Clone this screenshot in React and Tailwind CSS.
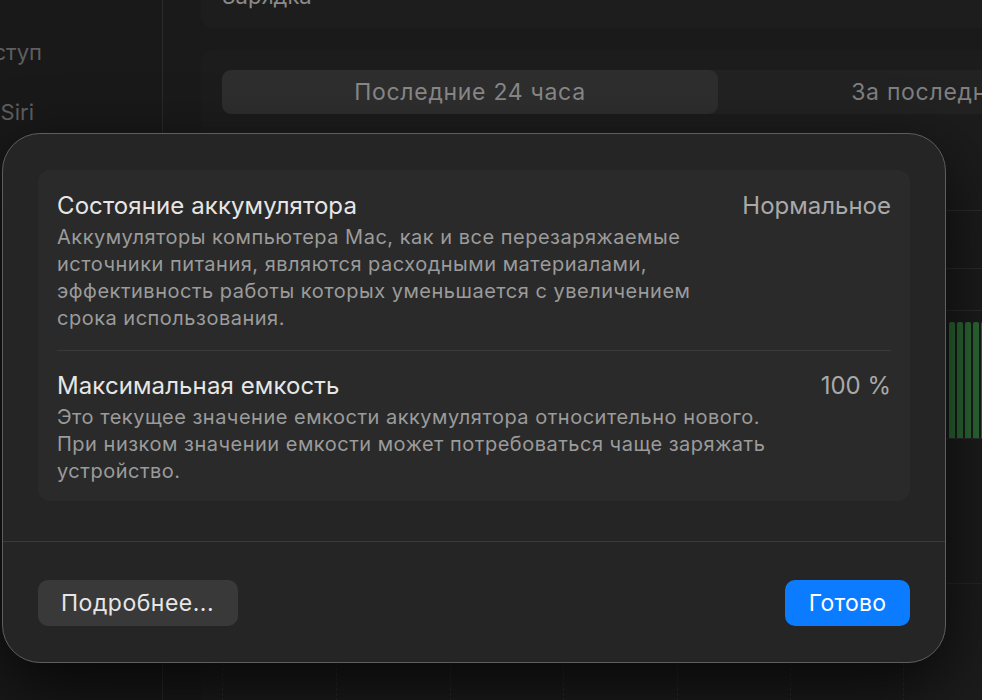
const font = { fontFamily: 'Inter, "Noto Sans", sans-serif' }

const gridX = [222, 336, 450, 563, 677, 790, 903]

function Row({ title, value, lines }) {
  return (
    <div className="flex justify-between gap-6">
      <div>
        <p className="text-[24px] leading-[28px] tracking-[0.1px] text-[#e6e6e6]">{title}</p>
        <div className="mt-[4px] text-[20px] leading-[27px] tracking-[0.5px] text-[#9b9b9b]">
          {lines.map((l) => (
            <p key={l} className="whitespace-nowrap">{l}</p>
          ))}
        </div>
      </div>
      <p className="whitespace-nowrap text-[24px] leading-[28px] text-[#a9a9a9]">{value}</p>
    </div>
  )
}

export default function App() {
  return (
    <div style={font} className="relative h-[700px] w-[982px] overflow-hidden bg-[#151515]">
      {/* settings window behind the sheet */}
      <div className="flex h-full">
        <aside className="w-[163px] shrink-0 border-r border-[#2a2a2a] bg-[#191919] pt-[36px] text-[22px] text-[#5f5f5f]">
          <div className="flex w-[42px] justify-end whitespace-nowrap">Универсальный доступ</div>
          <div className="mt-[27px] flex w-[34px] justify-end whitespace-nowrap">Apple Intelligence и Siri</div>
        </aside>
        <main className="flex-1 bg-[#1a1a1a] pl-[38px]">
          <div className="-mt-[20px] h-[48px] rounded-b-[12px] bg-[#1d1d1d] pl-[21px] text-[22px] text-[#8a8a8a]">Зарядка</div>
          <div className="mt-[22px] h-[680px] rounded-t-[12px] bg-[#1c1c1c] pt-[20px] pl-[21px]">
            <div className="flex h-[44px] w-[1024px] rounded-[9px] bg-[#222222]">
              <div className="flex w-[496px] items-center justify-center rounded-[9px] bg-[#2e2e2e] text-[23px] tracking-[0.7px] text-[#888888]">
                Последние 24 часа
              </div>
              <div className="flex flex-1 items-center justify-center whitespace-nowrap text-[23px] tracking-[0.7px] text-[#808080]">
                За последние 10 дней
              </div>
            </div>
            {/* usage chart */}
            <div className="relative mt-[52px] h-[540px] w-[800px]">
              <div className="absolute left-0 right-0 top-[44px] border-t border-[#2c2c2c]" />
              <div className="absolute left-0 right-0 top-[102px] border-t border-[#2c2c2c]" />
              <div className="absolute left-0 right-0 top-[144px] border-t border-[#2c2c2c]" />
              <div className="absolute left-0 right-0 top-[272px] border-t border-[#2a2a2a]" />
              <div className="absolute left-0 right-0 top-[417px] border-t border-[#262626]" />
              <div className="absolute left-[727px] top-[156px] flex h-[116px] gap-[2px]">
                <div className="w-[6px] rounded-t-[2px] bg-[#2c6b36]" />
                <div className="w-[6px] rounded-t-[2px] bg-[#2c6b36]" />
                <div className="w-[6px] rounded-t-[2px] bg-[#2c6b36]" />
                <div className="w-[6px] rounded-t-[2px] bg-[#2c6b36]" />
                <div className="w-[6px] rounded-t-[2px] bg-[#2c6b36]" />
              </div>
              {gridX.map((x) => (
                <div
                  key={x}
                  className="absolute top-[330px] bottom-0 border-l border-dashed border-[#292929]"
                  style={{ left: x - 222 }}
                />
              ))}
            </div>
          </div>
        </main>
      </div>

      {/* battery health sheet */}
      <div className="absolute left-[2px] top-[133px] flex h-[530px] w-[944px] flex-col rounded-[38px] border border-[#5e5e5e] bg-[#252525] shadow-[0_24px_70px_rgba(0,0,0,0.75)]">
        <div className="px-[35px] pt-[36px]">
          <div className="rounded-[12px] bg-[#2a2a2a] px-[19px] pb-[16px] pt-[22px]">
            <Row
              title="Состояние аккумулятора"
              value="Нормальное"
              lines={[
                'Аккумуляторы компьютера Mac, как и все перезаряжаемые',
                'источники питания, являются расходными материалами,',
                'эффективность работы которых уменьшается с увеличением',
                'срока использования.',
              ]}
            />
            <div className="mb-[21px] mt-[18px] border-t border-[#3a3a3a]" />
            <Row
              title="Максимальная емкость"
              value="100 %"
              lines={[
                'Это текущее значение емкости аккумулятора относительно нового.',
                'При низком значении емкости может потребоваться чаще заряжать',
                'устройство.',
              ]}
            />
          </div>
        </div>
        <div className="mt-[40px] border-t border-[#3a3a3a]" />
        <div className="flex justify-between px-[35px] pt-[38px]">
          <button className="h-[46px] w-[200px] rounded-[10px] bg-[#393939] pl-[23px] text-left text-[23px] tracking-[0.5px] text-[#e6e6e6]">
            Подробнее...
          </button>
          <button className="h-[46px] w-[125px] rounded-[10px] bg-[#0b7bff] text-[23px] tracking-[0.2px] text-white">
            Готово
          </button>
        </div>
      </div>
    </div>
  )
}
